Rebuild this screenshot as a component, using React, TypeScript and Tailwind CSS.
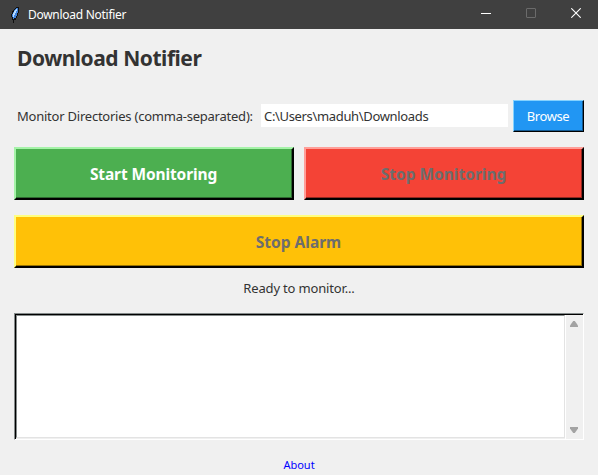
import React from 'react';

type BevelProps = {
  label: string;
  outer: string;
  inner: string;
};

function BevelButton({ label, outer, inner }: BevelProps) {
  return (
    <button className={`block h-[53px] border-2 border-r-black border-b-black ${outer}`}>
      <span className={`flex h-full items-center justify-center border-r border-b pt-[4px] text-[15.5px] leading-none font-bold whitespace-nowrap ${inner}`}>
        {label}
      </span>
    </button>
  );
}

function Feather() {
  return (
    <svg width="10" height="18" viewBox="0 0 10 18" shapeRendering="crispEdges">
      <path d="M6 1h3v6H8v3H7v2H6v2H4v3H3v-3H2v-3H1V8h1V5h1V4h1V3h1V2h1z" fill="#101010" />
      <path d="M6 2h2v5H7v3H6v2H4v1H3v-2H2V8h1V6h1V4h1V3h1z" fill="#3f83dc" />
      <path d="M6 3h1v2H6v2H5v2H4v2H3V7h1V5h1V4h1z" fill="#b8dcff" />
    </svg>
  );
}

function TitleBar() {
  return (
    <header className="flex h-[29px] items-center bg-[#404040] pl-[10px] text-white">
      <Feather />
      <span className="ml-2 text-[12px] leading-none tracking-[-0.28px] whitespace-nowrap">Download Notifier</span>
      <div className="ml-auto flex items-center gap-[35px] pr-[17px] pb-[3px]">
        <svg width="10" height="10" viewBox="0 0 10 10" shapeRendering="crispEdges">
          <path d="M0 5h10v1H0z" fill="#fff" />
        </svg>
        <svg width="10" height="10" viewBox="0 0 10 10" fill="none">
          <rect x="0.5" y="0.5" width="9" height="9" rx="0.5" stroke="#6b6b6b" />
        </svg>
        <svg width="10" height="10" viewBox="0 0 10 10" fill="none">
          <path d="M0.3 0.3l9.4 9.4M9.7 0.3L0.3 9.7" stroke="#fff" strokeWidth="1.1" />
        </svg>
      </div>
    </header>
  );
}

function LogBox() {
  return (
    <div className="mt-[15px] h-[127px] border border-t-[#848a8a] border-r-white border-b-white border-l-[#848a8a]">
      <div className="flex h-full border-t border-l border-black">
        <div className="mb-px flex-1 border border-t-[#848a8a] border-r-[#e3e3e3] border-b-[#e3e3e3] border-l-[#848a8a] bg-white" />
        <div className="flex w-[18px] flex-col items-center justify-between border-l border-white bg-[#f0f0f0] pt-[6px] pb-[6px] pr-[1px]">
          <svg width="8" height="6" viewBox="0 0 8 6">
            <path d="M3.2 0h1.6L8 4.5V6H0V4.5z" fill="#a3a3a3" />
          </svg>
          <svg width="8" height="6" viewBox="0 0 8 6">
            <path d="M3.2 6h1.6L8 1.5V0H0v1.5z" fill="#a3a3a3" />
          </svg>
        </div>
      </div>
    </div>
  );
}

export default function App() {
  return (
    <div className="flex h-[475px] w-[598px] flex-col overflow-hidden bg-[#f0f0f0] font-['Noto_Sans','Open_Sans',sans-serif] text-[#333333]">
      <TitleBar />
      <main className="flex flex-col pr-[14px] pl-[14px]">
        <h1 className="mt-[14px] h-[30px] pl-[3px] text-[21px] leading-[30px] font-bold tracking-[-0.47px] whitespace-nowrap">Download Notifier</h1>
        <div className="mt-[27px] flex h-8 items-start">
          <label className="w-[247px] pt-[6px] pl-[3px] text-[13px] leading-5 tracking-[-0.23px] whitespace-nowrap">Monitor Directories (comma-separated):</label>
          <input
            className="mt-1 h-[23px] w-[247px] bg-white pt-px pl-[3px] text-[13px] tracking-[-0.34px] outline-none"
            defaultValue="C:\Users\maduh\Downloads"
          />
          <button className="ml-[5px] h-8 w-[71px] border border-t-[#84d2ff] border-r-black border-b-black border-l-[#84d2ff] bg-[#2196f3]">
            <span className="flex h-full items-center justify-center border-r border-b border-[#145a92] pt-[2px] text-[13px] tracking-[-0.4px] text-white">
              Browse
            </span>
          </button>
        </div>
        <div className="mt-[15px] grid grid-cols-2 gap-[10px]">
          <BevelButton label="Start Monitoring" outer="border-t-[#a5f3a8] border-l-[#a5f3a8] bg-[#4caf50] tracking-[-0.12px]" inner="border-[#2e6930] text-white" />
          <BevelButton label="Stop Monitoring" outer="border-t-[#ff9e98] border-l-[#ff9e98] bg-[#f44336]" inner="border-[#922820] text-[#6d6d6d]" />
        </div>
        <div className="mt-[15px] grid">
          <BevelButton label="Stop Alarm" outer="border-t-[#ffff80] border-l-[#ffff80] bg-[#ffc107]" inner="border-[#997404] text-[#6d6d6d]" />
        </div>
        <p className="mt-[10px] h-5 text-center text-[13px] leading-5 tracking-[-0.16px]">Ready to monitor...</p>
        <LogBox />
        <a className="mt-[17px] text-center text-[11px] leading-4 text-[#0000ff]">About</a>
      </main>
    </div>
  );
}
